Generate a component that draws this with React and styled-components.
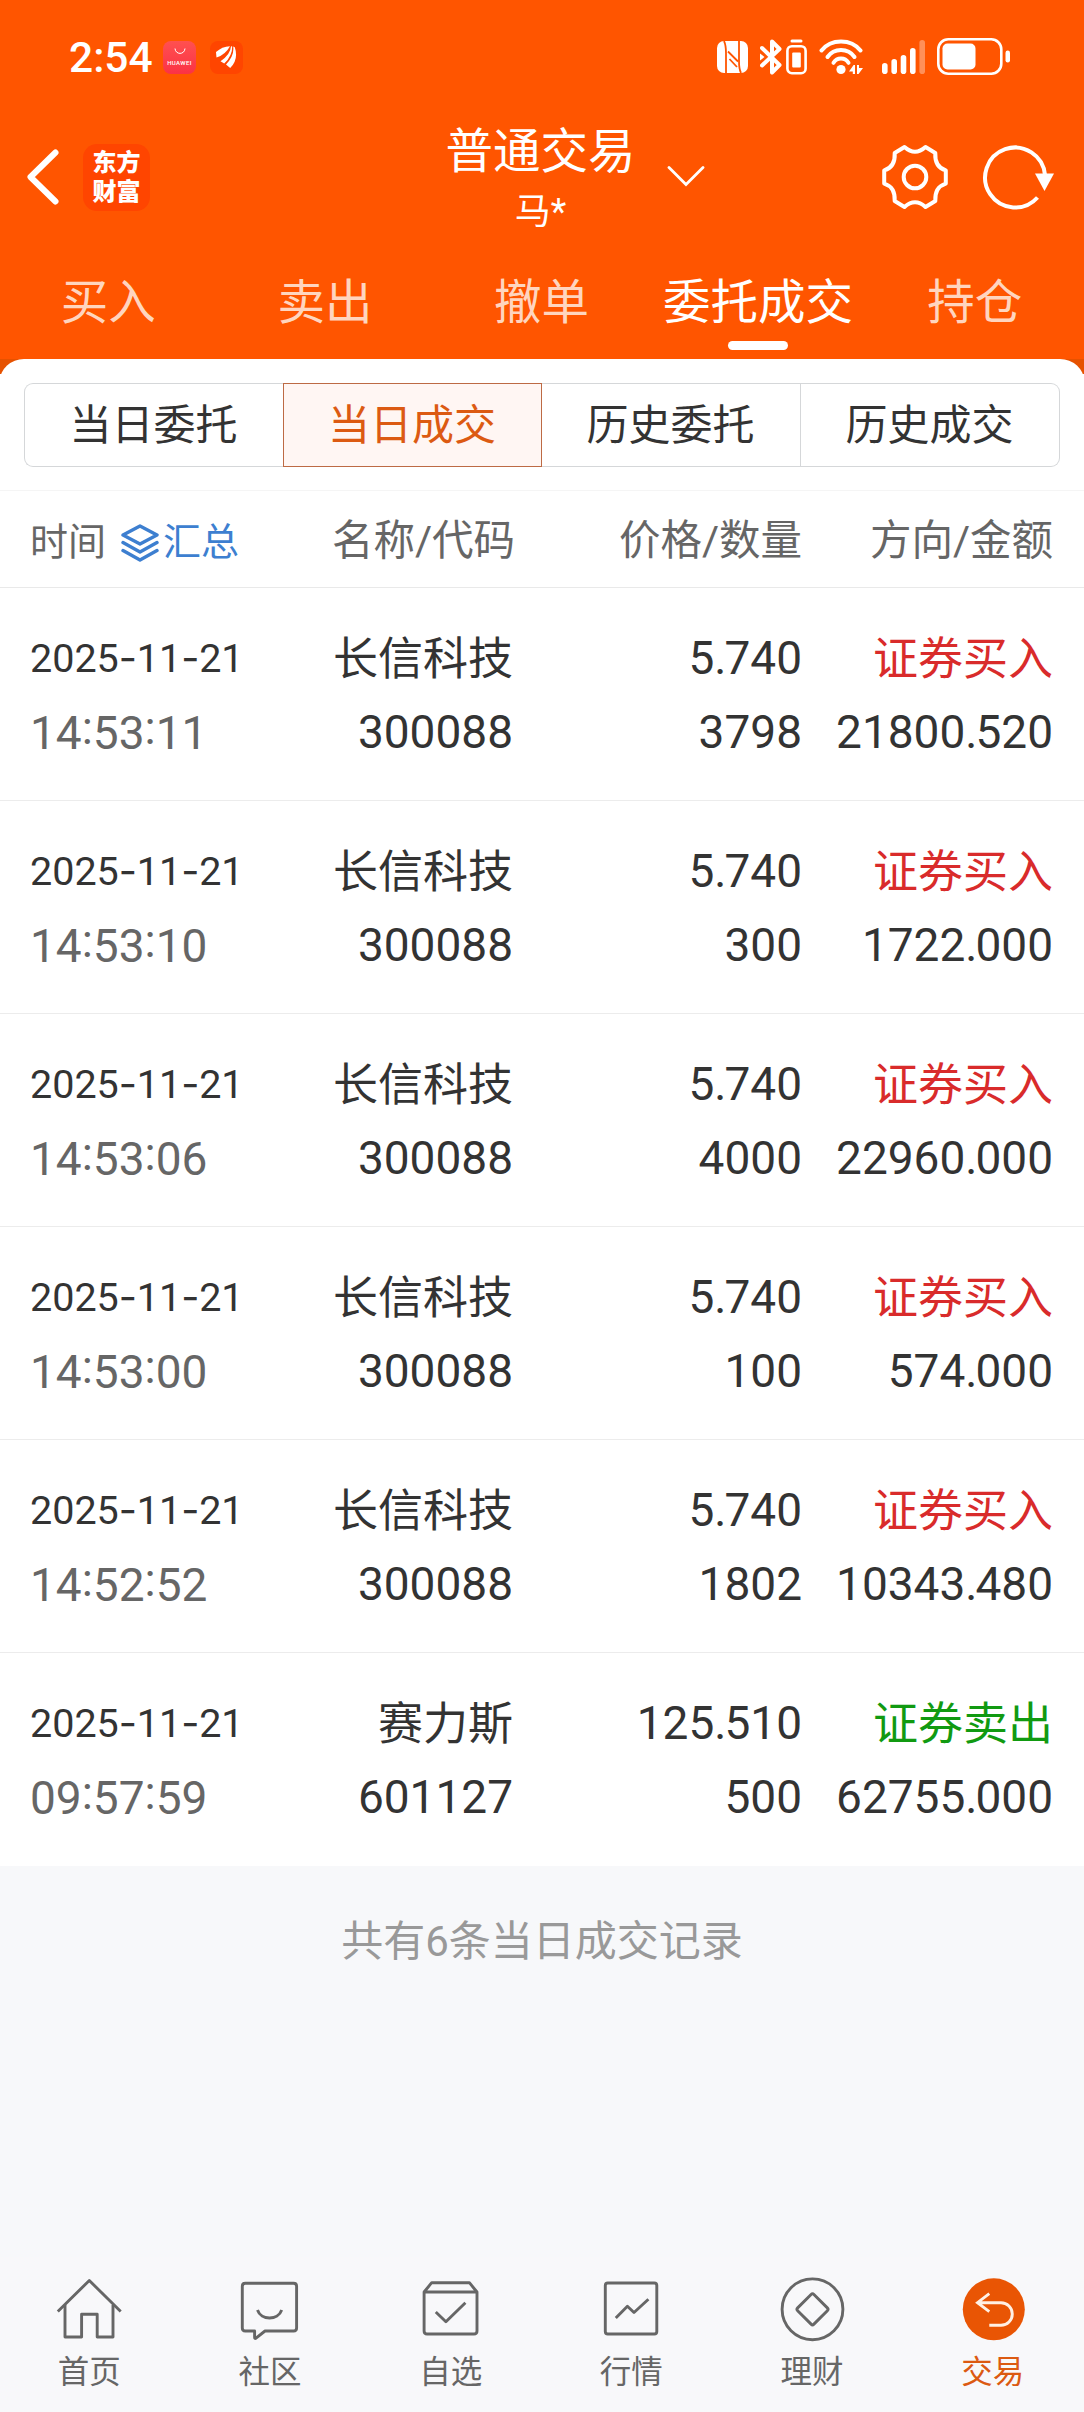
import React, { useState } from 'react';
import styled, { createGlobalStyle } from 'styled-components';

const GlobalStyle = createGlobalStyle`
  * {
    box-sizing: border-box;
  }

  body {
    margin: 0;
    padding: 0;
    background-color: #f7f8fa;
    font-family: Roboto, 'Noto Sans CJK SC', sans-serif;
    color: #333;
  }
`;

const Page = styled.div`
  display: flex;
  flex-direction: column;
  width: 1084px;
  height: 2412px;
  background: #f7f8fa;
`;

const Header = styled.header`
  background: #ff5500;
  color: #fff;
`;

const StatusBar = styled.div`
  display: flex;
  align-items: center;
  justify-content: space-between;
  height: 114px;
  padding: 0 73px 0 69px;
`;

const StatusGroup = styled.div`
  display: flex;
  align-items: center;
`;

const Clock = styled.span`
  width: 94px;
  padding-top: 2px;
  font-size: 42.5px;
  font-weight: 500;
  line-height: 50px;
`;

const AppBadge = styled.span`
  display: flex;
  flex-direction: column;
  align-items: center;
  justify-content: center;
  width: 33px;
  height: 33px;
  margin-right: 14px;
  border-radius: 8px;
  background: ${(props) => props.$bg};
`;

const BadgeText = styled.span`
  font-size: 6px;
  font-weight: 500;
  line-height: 7px;
  letter-spacing: 0.4px;
  margin-top: 4px;
`;

const StatusIcon = styled.svg`
  display: block;
  margin-left: ${(props) => props.$gap || 0}px;
`;

const TitleBar = styled.div`
  display: grid;
  grid-template-columns: 1fr auto 1fr;
  align-items: center;
  height: 126px;
  padding: 0 28px 0 25px;
`;

const TitleLeft = styled.div`
  display: flex;
  align-items: center;
  gap: 22px;
`;

const BrandLogo = styled.div`
  display: flex;
  flex-direction: column;
  align-items: center;
  width: 67px;
  height: 67px;
  padding-top: 5px;
  border-radius: 14px;
  background: #ff4500;
  font-size: 24px;
  font-weight: 900;
  line-height: 29px;
`;

const TitleText = styled.div`
  padding-top: 2px;
  text-align: center;
`;

const AccountType = styled.div`
  font-size: 47.5px;
  line-height: 68px;
`;

const AccountName = styled.div`
  font-size: 36px;
  line-height: 52px;
`;

const TitleRight = styled.div`
  display: flex;
  align-items: center;
`;

const ArrowDown = styled.svg`
  margin-left: 31px;
  margin-right: auto;
`;

const MainTabs = styled.nav`
  display: grid;
  grid-template-columns: repeat(5, 1fr);
  height: 119px;
  padding-right: 1px;
`;

const MainTab = styled.a`
  display: flex;
  flex-direction: column;
  align-items: center;
  padding-top: 33px;
  font-size: 47.5px;
  line-height: 60px;
  color: ${(props) => (props.$active ? '#fff' : '#ffd5bf')};
  cursor: pointer;

  &::after {
    content: '';
    width: 60px;
    height: 9px;
    margin-top: 8px;
    border-radius: 5px;
    background: ${(props) => (props.$active ? '#fff' : 'transparent')};
  }
`;

const PanelCap = styled.div`
  height: 15px;
  overflow: hidden;
  background: #e65200;

  &::before {
    content: '';
    display: block;
    height: 30px;
    border-radius: 24px 24px 0 0 / 22px 22px 0 0;
    background: #fff;
  }
`;

const Panel = styled.main`
  background: #fff;
`;

const Segments = styled.div`
  display: grid;
  grid-template-columns: repeat(4, 1fr);
  height: 84px;
  margin: 0 24px;
`;

const Segment = styled.button`
  padding: 2px 1px 0 0;
  border: 1px solid ${(props) => (props.$active ? '#bd6a44' : '#d5d7d9')};
  border-left-width: ${(props) => (props.$joined ? 0 : 1)}px;
  border-right-width: ${(props) => (props.$beforeActive ? 0 : 1)}px;
  background: ${(props) => (props.$active ? '#fff6f3' : '#fff')};
  color: ${(props) => (props.$active ? '#dc5a12' : '#333')};
  font-family: inherit;
  font-size: 42px;
  line-height: 60px;
  cursor: pointer;

  &:first-child {
    border-radius: 9px 0 0 9px;
  }

  &:last-child {
    border-radius: 0 9px 9px 0;
  }
`;

const SegmentArea = styled.div`
  height: 117px;
  padding-top: 9px;
  border-bottom: 1px solid #f5f5f5;
`;

const TableHead = styled.div`
  display: grid;
  grid-template-columns: 251px 234px 287px 251px;
  align-items: center;
  height: 97px;
  padding: 3px 31px 0 30px;
  border-bottom: 1px solid #e9e9e9;
  color: #666;
  font-size: 41.5px;
  line-height: 60px;
  text-align: right;
`;

const TimeHead = styled.div`
  display: flex;
  align-items: center;
  padding-top: 2px;
  font-size: 38px;
`;

const Summary = styled.a`
  display: flex;
  align-items: center;
  margin-left: 15px;
  color: #3d7fd0;
  cursor: pointer;

  svg {
    margin-top: 2px;
    margin-right: 4px;
  }
`;

const Row = styled.div`
  display: grid;
  grid-template-columns: 251px 232px 289px 251px;
  height: 213px;
  padding: 33px 31px 0 30px;
  border-bottom: 1px solid #ececec;
  font-size: 46px;
  line-height: 74px;
  text-align: right;

  &:last-child {
    border-bottom: none;
  }
`;

const Cell = styled.div`
  white-space: nowrap;
`;

const TimeCell = styled(Cell)`
  text-align: left;
`;

const DateText = styled.div`
  font-size: 39.5px;
`;

const Dash = styled.span`
  font-family: Inter, sans-serif;
  letter-spacing: -0.2px;
`;

const TimeText = styled.div`
  color: #666;
`;

const Colon = styled.span`
  position: relative;
  top: -5px;
`;

const Point = styled.span`
  letter-spacing: -2px;
`;

const CellText = styled.div`
  padding-top: 2px;
  margin-bottom: -2px;
  font-size: 45px;
`;

const Side = styled(CellText)`
  color: ${(props) => (props.$sell ? '#119a11' : '#d92b2b')};
`;

const RecordCount = styled.p`
  flex: 1;
  margin: 0;
  padding-top: 46px;
  color: #999;
  font-size: 42px;
  line-height: 60px;
  text-align: center;
`;

const BottomNav = styled.nav`
  display: grid;
  grid-template-columns: repeat(6, 1fr);
  height: 155px;
  background: #f8f8fa;
`;

const NavItem = styled.a`
  display: flex;
  flex-direction: column;
  align-items: center;
  padding-top: 16px;
  color: ${(props) => (props.$active ? '#dc5a12' : '#666')};
  font-size: 31.5px;
  line-height: 40px;
  cursor: pointer;

  svg {
    margin-bottom: 8px;
  }
`;

const NavLabel = styled.span`
  padding-right: 2px;
`;

const NavSvg = ({ children }) => (
  <svg
    width="72"
    height="72"
    viewBox="0 0 72 72"
    fill="none"
    stroke="currentColor"
    strokeWidth="2.9"
    strokeLinejoin="round"
  >
    {children}
  </svg>
);

const HomeIcon = () => (
  <NavSvg>
    <path d="M3.8 38.5 35.3 7.5 66.7 38.5" />
    <path d="M11 32V64H27.6V41.3H43.2V64H59V32" />
  </NavSvg>
);

const CommunityIcon = () => (
  <NavSvg>
    <path d="M10.3 10.3H58.6Q61.6 10.3 61.6 13.3V55Q61.6 58 58.6 58H30L21 65.2Q19.6 66 19.6 64.2V58H10.3Q7.3 58 7.3 55V13.3Q7.3 10.3 10.3 10.3Z" />
    <path d="M22.5 37C26 47.6 43 47.6 46.7 37" />
  </NavSvg>
);

const FavouriteIcon = () => (
  <NavSvg>
    <path d="M8.1 19 15.7 9.7H53.4L61 19V58Q61 61 58 61H11.1Q8.1 61 8.1 58ZM8.1 19H61" />
    <path d="M19.8 39 29.9 48.7 49.4 29.7" />
  </NavSvg>
);

const QuotesIcon = () => (
  <NavSvg>
    <rect x="9.3" y="10" width="51.5" height="51" rx="2.5" />
    <path d="M19.8 44.9 31.4 33.2 38 39.5 52.4 26.2" />
  </NavSvg>
);

const WealthIcon = () => (
  <NavSvg>
    <circle cx="35.5" cy="36.3" r="30.4" />
    <rect x="24" y="24.8" width="23" height="23" rx="2" transform="rotate(45 35.5 36.3)" />
  </NavSvg>
);

const TradeIcon = () => (
  <NavSvg>
    <circle cx="35.8" cy="36.3" r="31" fill="#e95504" stroke="none" />
    <path
      d="M31.3 20.7 19.5 29.7 31.3 38.7M19.5 29.7H43A11.3 11.3 0 0 1 43 52.3H31.3"
      stroke="#fff0e4"
      strokeLinejoin="miter"
    />
  </NavSvg>
);

const mainTabs = ['买入', '卖出', '撤单', '委托成交', '持仓'];
const segments = ['当日委托', '当日成交', '历史委托', '历史成交'];

const deals = [
  { date: '2025-11-21', time: '14:53:11', name: '长信科技', code: '300088', price: '5.740', count: '3798', side: '证券买入', amount: '21800.520' },
  { date: '2025-11-21', time: '14:53:10', name: '长信科技', code: '300088', price: '5.740', count: '300', side: '证券买入', amount: '1722.000' },
  { date: '2025-11-21', time: '14:53:06', name: '长信科技', code: '300088', price: '5.740', count: '4000', side: '证券买入', amount: '22960.000' },
  { date: '2025-11-21', time: '14:53:00', name: '长信科技', code: '300088', price: '5.740', count: '100', side: '证券买入', amount: '574.000' },
  { date: '2025-11-21', time: '14:52:52', name: '长信科技', code: '300088', price: '5.740', count: '1802', side: '证券买入', amount: '10343.480' },
  { date: '2025-11-21', time: '09:57:59', name: '赛力斯', code: '601127', price: '125.510', count: '500', side: '证券卖出', amount: '62755.000' },
];

const navItems = [
  { label: '首页', Icon: HomeIcon },
  { label: '社区', Icon: CommunityIcon },
  { label: '自选', Icon: FavouriteIcon },
  { label: '行情', Icon: QuotesIcon },
  { label: '理财', Icon: WealthIcon },
  { label: '交易', Icon: TradeIcon },
];

// puts a styled separator between the digit groups
const withSeparator = (text, mark, Mark) =>
  text.split(mark).map((part, i) => (
    <React.Fragment key={i}>
      {i > 0 && <Mark>{mark}</Mark>}
      {part}
    </React.Fragment>
  ));

const StatusIcons = () => (
  <StatusGroup>
    <StatusIcon width="31" height="32" viewBox="0 0 31 32">
      <rect width="31" height="32" rx="7" fill="#fff" />
      <g fill="none" stroke="#ff5500" strokeWidth="1.8">
        <path d="M7 0Q9 4 9 12V32M24 32Q22 28 22 20V0" />
        <path d="M11 10.5 21 20.5M12.5 18 20 26" />
      </g>
    </StatusIcon>
    <StatusIcon $gap={12} width="22" height="36" viewBox="0 0 22 36">
      <path d="M2 9 19.5 26 12 33.5V2.5L19.5 10 2 26.5" fill="none" stroke="#fff" strokeWidth="4" strokeLinecap="round" strokeLinejoin="round" />
      <path d="M0 14.5 4.5 18 0 21.5Z" fill="#fff" />
    </StatusIcon>
    <StatusIcon $gap={4} width="21" height="36" viewBox="0 0 21 36">
      <rect x="4.5" y="0.5" width="12" height="3" rx="1.5" fill="#fff" />
      <rect x="1.4" y="7.2" width="18.2" height="27" rx="4.5" fill="none" stroke="#fff" strokeWidth="2.6" />
      <rect x="6.2" y="13.5" width="8.6" height="15" rx="1" fill="#fff" />
    </StatusIcon>
    <StatusIcon $gap={12} width="45" height="36" viewBox="0 0 45 36">
      <g fill="none" stroke="#fff" strokeWidth="4" strokeLinecap="round">
        <path d="M2.5 11.5C12 -0.5 32 -0.5 41.5 11.5" />
        <path d="M8.5 18C15 8.8 29 8.8 35.5 18" />
        <path d="M14.5 23.8C18 18.2 26 18.2 29.5 23.8" />
      </g>
      <circle cx="22" cy="30.5" r="4.6" fill="#fff" />
      <path d="M36 26V35H33.8V32.4H30L34.6 26ZM38 26H40V29H44L39.5 35H38Z" fill="#fff" />
    </StatusIcon>
    <StatusIcon $gap={18} width="44" height="34" viewBox="0 0 44 34">
      <g fill="#fff">
        <rect x="0" y="23" width="5.6" height="11" rx="2.8" />
        <rect x="9.4" y="19" width="5.6" height="15" rx="2.8" />
        <rect x="18.7" y="15" width="5.6" height="19" rx="2.8" />
        <rect x="28" y="8" width="5.6" height="26" rx="2.8" />
        <rect x="37.4" y="0" width="5.6" height="34" rx="2.8" fillOpacity="0.35" />
      </g>
    </StatusIcon>
    <StatusIcon $gap={11} width="74" height="38" viewBox="0 0 74 38">
      <rect x="1.3" y="1.3" width="63" height="34.4" rx="10" fill="none" stroke="#fff" strokeWidth="2.6" />
      <rect x="5.5" y="5.5" width="33" height="26" rx="5" fill="#fff" />
      <rect x="68.5" y="12.5" width="4.5" height="12" rx="2.2" fill="#fff" />
    </StatusIcon>
  </StatusGroup>
);

const App = () => {
  const [tab, setTab] = useState(3);
  const [segment, setSegment] = useState(1);
  const [nav, setNav] = useState(5);

  return (
    <>
      <GlobalStyle />
      <Page>
        <Header>
          <StatusBar>
            <StatusGroup>
              <Clock>2:54</Clock>
              <AppBadge $bg="linear-gradient(#ff5050, #fb3245)">
                <svg width="12" height="7" viewBox="0 0 12 7">
                  <path d="M1 0.5C1.5 7 10.5 7 11 0.5" fill="none" stroke="#fff" strokeWidth="1" />
                </svg>
                <BadgeText>HUAWEI</BadgeText>
              </AppBadge>
              <AppBadge $bg="#ff4500">
                <svg width="21" height="22" viewBox="0 0 21 22" fill="#fff">
                  <path d="M0 6Q6 0.5 14 0.2Q9.5 8.5 0.5 11.6Z" />
                  <path d="M15 0.3Q14.5 8.5 4.5 15.3L8.2 17.6Q16.5 9.5 16.2 0.4Z" />
                  <path d="M17.2 0.6Q18.5 9.5 10 18.5L14.2 21.9Q22.8 13.5 18.8 1.3Z" />
                </svg>
              </AppBadge>
            </StatusGroup>
            <StatusIcons />
          </StatusBar>

          <TitleBar>
            <TitleLeft>
              <svg width="36" height="58" viewBox="0 0 36 58">
                <path d="M30.5 4.5 5.5 29 30.5 53.5" fill="none" stroke="#fff" strokeWidth="6" strokeLinecap="round" strokeLinejoin="round" />
              </svg>
              <BrandLogo>
                <span>东方</span>
                <span>财富</span>
              </BrandLogo>
            </TitleLeft>
            <TitleText>
              <AccountType>普通交易</AccountType>
              <AccountName>马*</AccountName>
            </TitleText>
            <TitleRight>
              <ArrowDown width="38" height="22" viewBox="0 0 38 22">
                <path d="M2 1.5 19 18.5 36 1.5" fill="none" stroke="#fff" strokeWidth="2.8" strokeLinecap="round" />
              </ArrowDown>
              <svg width="70" height="70" viewBox="-35 -35 70 70" fill="none" stroke="#fff" strokeWidth="4" strokeLinejoin="round">
                <path d="M-10.5 -30Q0 -20.5 10.5 -30L20.3 -24Q19.5 -10 30.8 -6.6V6.6Q19.5 10 20.3 24L10.5 30Q0 20.5 -10.5 30L-20.3 24Q-19.5 10 -30.8 6.6V-6.6Q-19.5 -10 -20.3 -24Z" />
                <circle r="11.3" />
              </svg>
              <StatusIcon $gap={31} width="75" height="70" viewBox="-34 -35 75 70">
                <path d="M22.5 20.5A30 30 0 1 1 30 -2" fill="none" stroke="#fff" strokeWidth="4" />
                <path d="M20 -3.5H39L29.5 14Z" fill="#fff" />
              </StatusIcon>
            </TitleRight>
          </TitleBar>

          <MainTabs>
            {mainTabs.map((label, i) => (
              <MainTab key={label} $active={i === tab} onClick={() => setTab(i)}>
                {label}
              </MainTab>
            ))}
          </MainTabs>
        </Header>

        <PanelCap />
        <Panel>
          <SegmentArea>
            <Segments>
              {segments.map((label, i) => (
                <Segment
                  key={label}
                  $active={i === segment}
                  $joined={i > 0 && i !== segment}
                  $beforeActive={i === segment - 1}
                  onClick={() => setSegment(i)}
                >
                  {label}
                </Segment>
              ))}
            </Segments>
          </SegmentArea>

          <TableHead>
            <TimeHead>
              时间
              <Summary>
                <svg width="38" height="38" viewBox="0 0 38 38" fill="none" stroke="currentColor" strokeWidth="3.4" strokeLinejoin="round" strokeLinecap="round">
                  <path d="M19 2 36 11 19 20 2 11Z" />
                  <path d="M2 18.5 19 28 36 18.5M2 26.5 19 36 36 26.5" />
                </svg>
                汇总
              </Summary>
            </TimeHead>
            <Cell>名称/代码</Cell>
            <Cell>价格/数量</Cell>
            <Cell>方向/金额</Cell>
          </TableHead>

          <div>
            {deals.map((deal) => (
              <Row key={deal.time}>
                <TimeCell>
                  <DateText>{withSeparator(deal.date, '-', Dash)}</DateText>
                  <TimeText>{withSeparator(deal.time, ':', Colon)}</TimeText>
                </TimeCell>
                <Cell>
                  <CellText>{deal.name}</CellText>
                  {deal.code}
                </Cell>
                <Cell>
                  <div>{withSeparator(deal.price, '.', Point)}</div>
                  {deal.count}
                </Cell>
                <Cell>
                  <Side $sell={deal.side === '证券卖出'}>{deal.side}</Side>
                  {withSeparator(deal.amount, '.', Point)}
                </Cell>
              </Row>
            ))}
          </div>
        </Panel>

        <RecordCount>共有{deals.length}条当日成交记录</RecordCount>

        <BottomNav>
          {navItems.map(({ label, Icon }, i) => (
            <NavItem key={label} $active={i === nav} onClick={() => setNav(i)}>
              <Icon />
              <NavLabel>{label}</NavLabel>
            </NavItem>
          ))}
        </BottomNav>
      </Page>
    </>
  );
};

export default App;
